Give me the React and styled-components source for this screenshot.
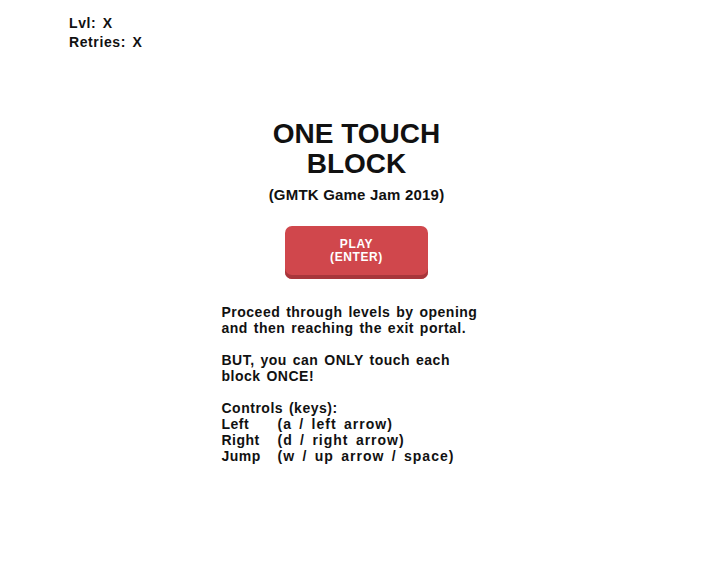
import React from "react"
import styled, { createGlobalStyle } from "styled-components"

const GlobalStyle = createGlobalStyle`
    html, body {
        margin: 0;
        padding: 0;
        background: #ffffff;
    }
    body {
        font-family: "Liberation Sans", Arial, sans-serif;
        font-weight: bold;
        color: #111111;
    }
`

const Page = styled.div`
    width: 713px;
    height: 565px;
    display: flex;
    flex-direction: column;
`

const Hud = styled.div`
    padding: 14px 0 0 69px;
    font-size: 14px;
    line-height: 19px;
    letter-spacing: 0.6px;
    word-spacing: 2px;
`

const Main = styled.div`
    display: flex;
    flex-direction: column;
    align-items: center;
    margin-top: 67px;
`

const Title = styled.h1`
    margin: 0;
    font-size: 28px;
    line-height: 30px;
    text-align: center;
`

const Subtitle = styled.div`
    margin-top: 5px;
    font-size: 15px;
    line-height: 22px;
    letter-spacing: 0.2px;
`

const PlayButton = styled.button`
    margin-top: 20px;
    width: 143px;
    height: 53px;
    border: none;
    border-radius: 7px;
    background: #d0474c;
    box-shadow: inset 0 -4px 0 #a8363b;
    color: #ffffff;
    font-family: inherit;
    font-weight: bold;
    font-size: 12px;
    line-height: 13px;
    letter-spacing: 0.6px;
    padding: 0 0 4px;
    cursor: pointer;
`

const Info = styled.div`
    width: 270px;
    margin-top: 25px;
    font-size: 14px;
    line-height: 16px;
    letter-spacing: 0.5px;
    word-spacing: 1.5px;
`

const Paragraph = styled.p`
    margin: 0 0 16px;
`

const Controls = styled.div`
    display: grid;
    grid-template-columns: 56px auto;
`

const KeyDesc = styled.span`
    letter-spacing: 1px;
    word-spacing: 2.5px;
`

export default function App() {
    const controls = [
        ["Left", "(a / left arrow)"],
        ["Right", "(d / right arrow)"],
        ["Jump", "(w / up arrow / space)"],
    ]

    return (
        <Page>
            <GlobalStyle />
            <Hud>
                <div>Lvl: X</div>
                <div>Retries: X</div>
            </Hud>
            <Main>
                <Title>
                    ONE TOUCH
                    <br />
                    BLOCK
                </Title>
                <Subtitle>(GMTK Game Jam 2019)</Subtitle>
                <PlayButton type="button">
                    PLAY
                    <br />
                    (ENTER)
                </PlayButton>
                <Info>
                    <Paragraph>
                        Proceed through levels by opening
                        <br />
                        and then reaching the exit portal.
                    </Paragraph>
                    <Paragraph>
                        BUT, you can ONLY touch each
                        <br />
                        block ONCE!
                    </Paragraph>
                    <div>Controls (keys):</div>
                    <Controls>
                        {controls.map(([key, desc]) => (
                            <React.Fragment key={key}>
                                <span>{key}</span>
                                <KeyDesc>{desc}</KeyDesc>
                            </React.Fragment>
                        ))}
                    </Controls>
                </Info>
            </Main>
        </Page>
    )
}
